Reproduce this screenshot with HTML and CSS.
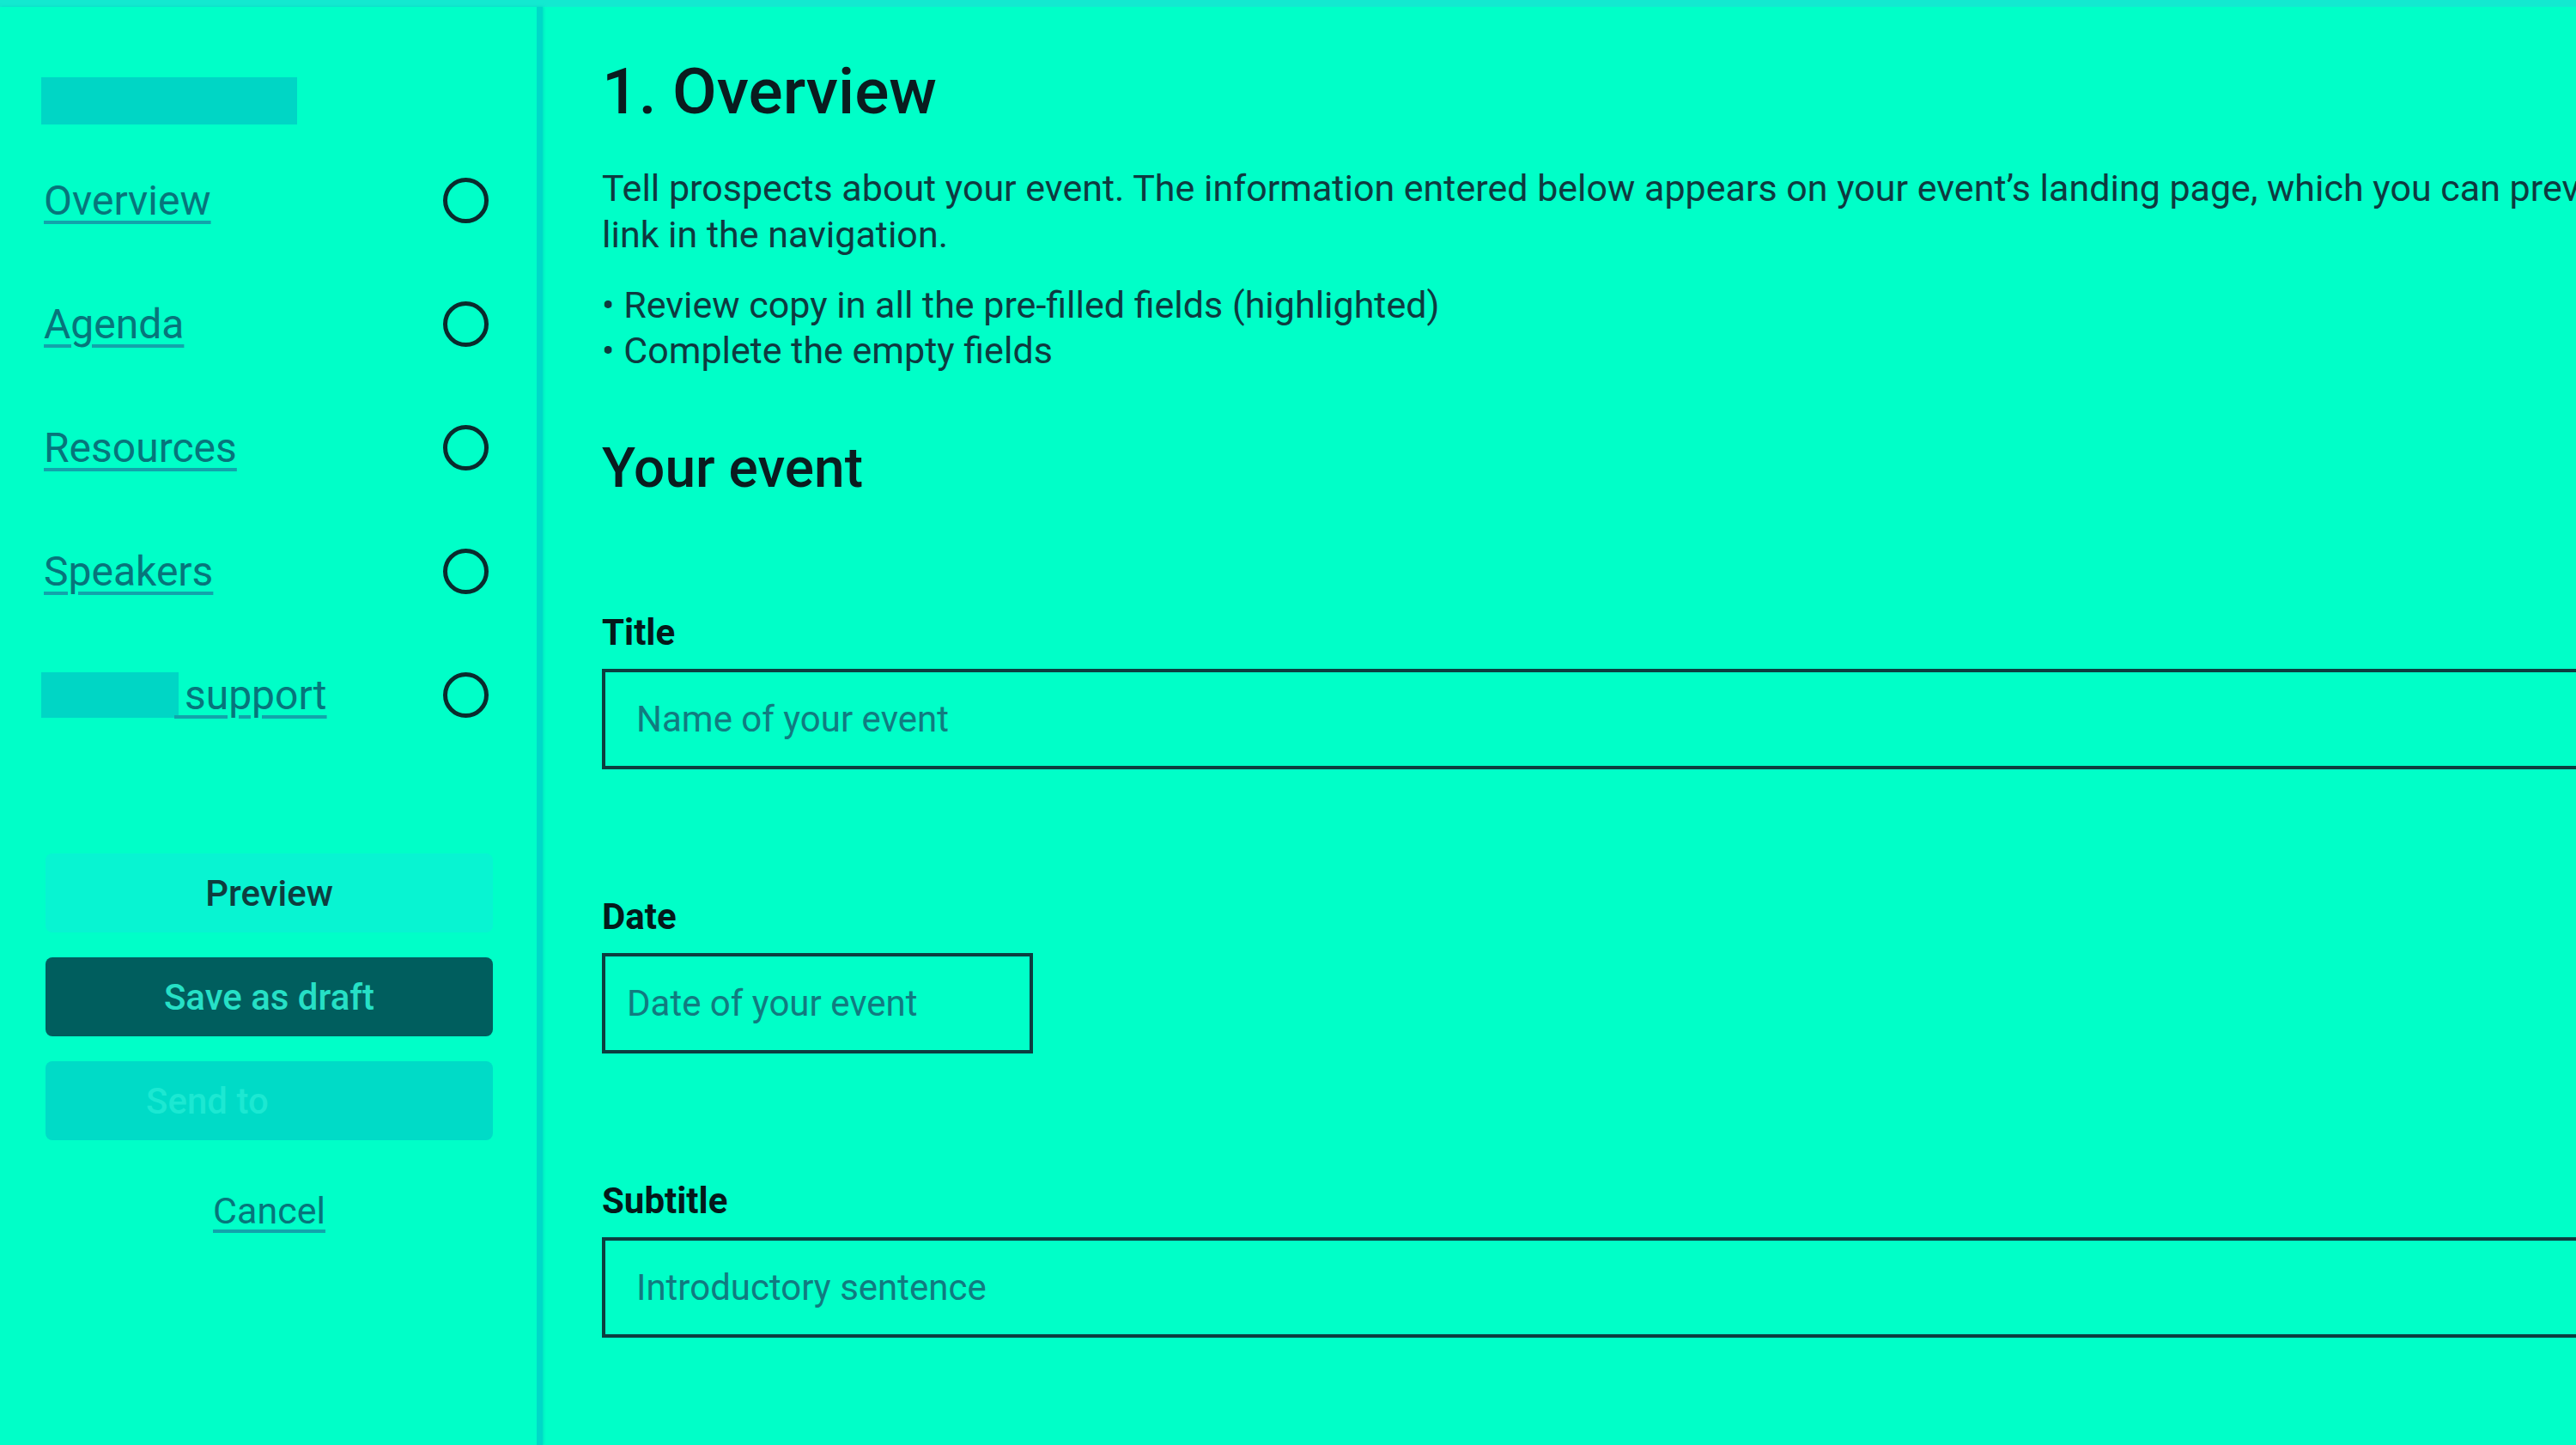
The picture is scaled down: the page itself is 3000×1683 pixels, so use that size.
FILE: index.html
```html
<!doctype html>
<html lang="en">
<head>
	<meta charset="utf-8">
	<meta name="viewport" content="width=device-width, initial-scale=1.0">
	<title>1. Overview</title>
	<link rel="stylesheet" href="styles.css">
</head>
<body>
	<div class="topbar"></div>
	<div class="layout">
		<aside class="sidebar">
			<div class="logo"></div>
			<ul class="steps">
				<li><a href="#">Overview</a><span class="status"></span></li>
				<li><a href="#">Agenda</a><span class="status"></span></li>
				<li><a href="#">Resources</a><span class="status"></span></li>
				<li><a href="#">Speakers</a><span class="status"></span></li>
				<li><a href="#"><span class="redact"></span> support</a><span class="status"></span></li>
			</ul>
			<div class="actions">
				<button class="btn btn-preview" type="button">Preview</button>
				<button class="btn btn-draft" type="button">Save as draft</button>
				<button class="btn btn-send" type="button" disabled>Send to</button>
				<a class="cancel" href="#">Cancel</a>
			</div>
		</aside>

		<main class="main">
			<div class="content">
				<h1>1. Overview</h1>
				<p class="intro">Tell prospects about your event. The information entered below appears on your event’s landing page, which you can preview using the Preview<br>link in the navigation.</p>
				<ul class="tips">
					<li>• Review copy in all the pre-filled fields (highlighted)</li>
					<li>• Complete the empty fields</li>
				</ul>

				<h2>Your event</h2>

				<div class="field">
					<label for="title">Title</label>
					<input id="title" type="text" placeholder="Name of your event">
				</div>
				<div class="field">
					<label for="date">Date</label>
					<input id="date" class="input-date" type="text" placeholder="Date of your event">
				</div>
				<div class="field">
					<label for="subtitle">Subtitle</label>
					<input id="subtitle" type="text" placeholder="Introductory sentence">
				</div>
			</div>
		</main>
	</div>
</body>
</html>
```

FILE: styles.css
```css
html, body {
	margin: 0;
	padding: 0;
}
body {
	background: #00ffc8;
	font-family: Roboto, "Liberation Sans", sans-serif;
	color: #0e3a40;
	overflow: hidden;
	height: 1683px;
}

.topbar {
	height: 8px;
	background: #13e9d0;
}

.layout {
	display: flex;
	height: calc(100% - 8px);
}

/* sidebar */
.sidebar {
	flex: none;
	width: 632px;
	box-sizing: border-box;
	padding: 82px 51px 0 51px;
	border-right: 7px solid #00d9c8;
	box-shadow: 1px 0 3px rgba(0, 200, 190, 0.6);
}
.logo {
	width: 298px;
	height: 55px;
	margin-left: -3px;
	background: #00d6c5;
}
.steps {
	list-style: none;
	margin: 16px 0 0;
	padding: 0;
}
.steps li {
	display: flex;
	align-items: center;
	justify-content: space-between;
	height: 144px;
}
.steps a,
.cancel {
	font-size: 48px;
	color: #07757b;
	text-decoration: underline;
	text-decoration-color: #12a4ab;
	text-decoration-thickness: 4px;
	text-underline-offset: 7px;
}
.redact {
	display: inline-block;
	width: 160px;
	height: 53px;
	margin: -6px -5px 0 -3px;
	background: #00d6c5;
	vertical-align: middle;
}
.status {
	width: 53px;
	height: 53px;
	box-sizing: border-box;
	border: 5px solid #0a2b2d;
	border-radius: 50%;
	margin-right: 5px;
}

.actions {
	margin-top: 113px;
	padding-left: 2px;
	display: flex;
	flex-direction: column;
	gap: 29px;
}
.btn {
	display: block;
	width: 100%;
	height: 92px;
	border: 0;
	border-radius: 8px;
	font-family: inherit;
	font-size: 42px;
	font-weight: 500;
	padding: 0;
}
.btn-preview {
	background: #08f4d2;
	color: #0e3d3f;
}
.btn-draft {
	background: #005e5e;
	color: #26e0c6;
}
.btn-send {
	background: #00dbc7;
	color: #1ce8d2;
	text-align: left;
	padding-left: 117px;
}
.cancel {
	align-self: center;
	margin-top: 28px;
	font-size: 43px;
	line-height: 50px;
}

/* main */
.main {
	flex: none;
	padding: 53px 0 0 69px;
}
.content {
	width: 2600px;
}
h1 {
	margin: 0;
	font-size: 75px;
	line-height: 90px;
	font-weight: 500;
	color: #0a1c1f;
}
.intro {
	margin: 41px 0 0;
	font-size: 43px;
	line-height: 54px;
	white-space: nowrap;
}
.tips {
	list-style: none;
	margin: 29px 0 0;
	padding: 0;
	font-size: 43px;
	line-height: 53px;
}
h2 {
	margin: 72px 0 0;
	font-size: 64px;
	line-height: 77px;
	font-weight: 500;
	color: #0a1c1f;
}

.field {
	margin-top: 147px;
}
.field:first-of-type {
	margin-top: 128px;
}
.field label {
	display: block;
	font-size: 42px;
	line-height: 50px;
	font-weight: 700;
	color: #04191a;
	margin-bottom: 17px;
}
.field input {
	display: block;
	width: 100%;
	height: 117px;
	box-sizing: border-box;
	border: 4px solid #0c3e40;
	background: transparent;
	padding: 0 36px;
	font-family: inherit;
	font-size: 42px;
	color: #0e3a40;
}
.field input::placeholder {
	color: #117b80;
}
.field .input-date {
	width: 502px;
	padding: 0 25px;
}
```
